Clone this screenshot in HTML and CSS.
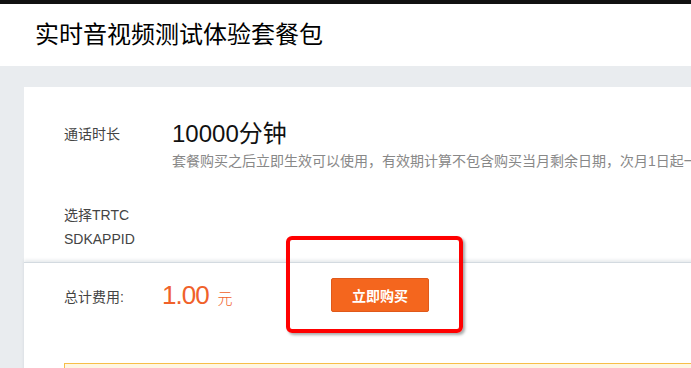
FILE: index.html
```html
<!DOCTYPE html>
<html>
    <head>
        <meta http-equiv="Content-Type" content="text/html; charset=utf-8" />
        <meta name="viewport" content="width=device-width, initial-scale=1.0">
        <link rel="stylesheet" href="styles.css">
    </head>
<body>
    <div class="topBar"></div>
    <div class="pageHead">
        <h1 class="pageTitle">实时音视频测试体验套餐包</h1>
    </div>
    <div class="pageBody">
        <div class="card">
            <div class="formRow">
                <div class="formLabel labelMain">通话时长</div>
                <div class="formValue">
                    <div class="amount">10000分钟</div>
                    <div class="hint">套餐购买之后立即生效可以使用，有效期计算不包含购买当月剩余日期，次月1日起一个月内有效</div>
                </div>
            </div>
            <div class="formRow rowApp">
                <div class="formLabel">选择TRTC<br>SDKAPPID</div>
            </div>
        </div>
        <div class="buyBar">
            <div class="buyLine">
                <span class="formLabel totalLabel">总计费用:</span>
                <span class="price">1.00<span class="unit">元</span></span>
                <button class="buyBtn">立即购买</button>
                <div class="markBox"></div>
            </div>
            <div class="notice"></div>
        </div>
    </div>
</body>
</html>
```

FILE: styles.css
```css
html, body{
    margin: 0; padding: 0;
    overflow: hidden;
    background-color: #e9ecef;
    font-family: "Liberation Sans", "Noto Sans CJK SC", sans-serif;
}
.topBar{
    height: 4px; background-color: #111;
}
.pageHead{
    height: 62px; background-color: #fff;
    display: flex; align-items: center;
    padding-left: 35px;
}
.pageTitle{
    margin: 0; font-size: 24px; font-weight: normal; color: #000;
    line-height: 32px;
}
.pageBody{
    padding: 21px 0 0 24px;
    width: 1000px;
}
.card{
    background-color: #fff;
    padding: 31px 0 11px 40px;
}
.formRow{
    display: flex;
}
.rowApp{
    margin-top: 31px;
}
.formLabel{
    width: 108px; flex-shrink: 0;
    font-size: 14px; line-height: 24px; color: #444;
}
.labelMain{
    padding-top: 4px;
}
.amount{
    font-size: 24px; line-height: 32px; color: #111;
}
.hint{
    font-size: 14px; line-height: 22px; color: #888;
    white-space: nowrap;
}
.buyBar{
    background-color: #fff;
    border-top: 1px solid #d3dae0;
    box-shadow: 0 -2px 3px rgba(60, 80, 100, 0.12);
    padding: 15px 0 0 40px;
    height: 120px;
}
.buyLine{
    position: relative;
    display: flex; align-items: center;
    height: 34px;
}
.totalLabel{
    width: 98px; padding-top: 4px;
}
.price{
    width: 169px;
    font-size: 26px; letter-spacing: -1px; color: #f0612a;
    font-weight: 300;
}
.unit{
    font-size: 15px; letter-spacing: 0; margin-left: 9px;
}
.buyBtn{
    width: 98px; height: 34px;
    background-color: #f4661e; border: 1px solid #e0591a; border-radius: 2px;
    color: #fff; font-size: 14px; font-weight: bold;
    font-family: "Liberation Sans", "Noto Sans CJK SC", sans-serif;
    cursor: pointer;
}
.markBox{
    position: absolute; left: 222px; top: -42px;
    width: 169px; height: 89px;
    border: 4px solid #f00; border-radius: 6px;
    box-shadow: 2px 2px 3px rgba(0, 0, 0, 0.35);
}
.notice{
    margin-top: 51px;
    height: 40px;
    border: 1px solid #f7bf48;
    background-color: #fff6e2;
}
```
